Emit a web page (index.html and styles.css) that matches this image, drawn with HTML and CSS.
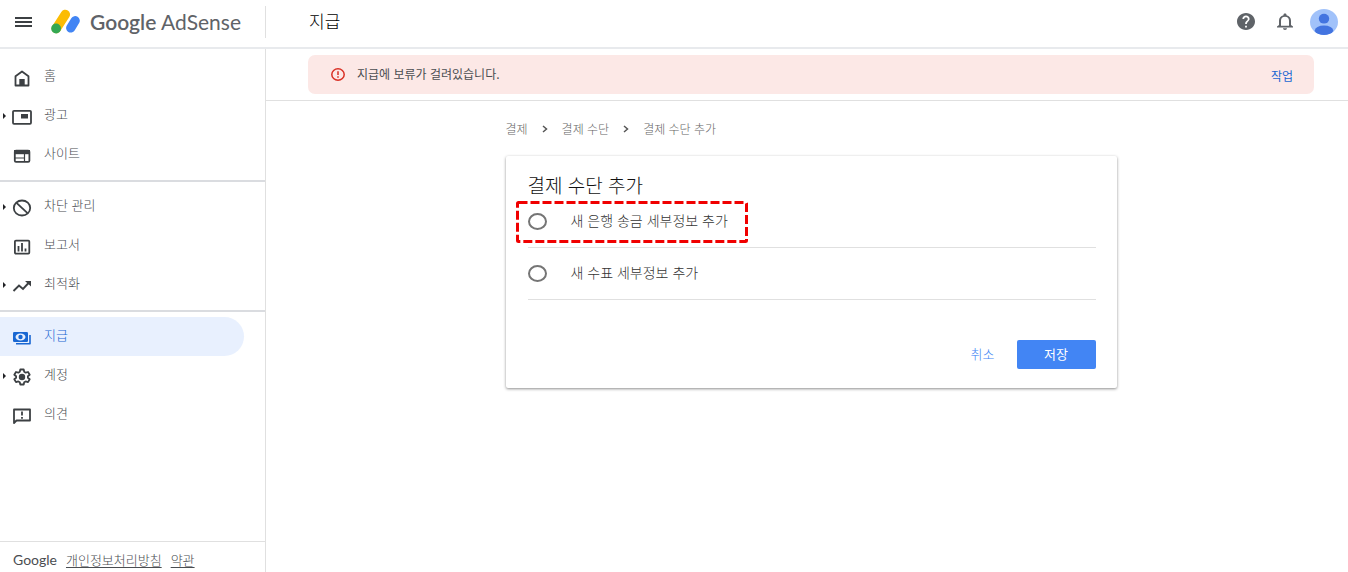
FILE: index.html
```html
<!DOCTYPE html>
<html lang="ko">
<head>
<meta charset="utf-8">
<meta name="viewport" content="width=device-width, initial-scale=1">
<title>Google AdSense</title>
<link rel="stylesheet" href="styles.css">
</head>
<body>
<header class="topbar">
  <div class="brand">
    <button class="icon-button menu-button" type="button" aria-label="메뉴">
      <svg width="18" height="12" viewBox="0 0 18 12"><path d="M1 2h17M1 6h17M1 10h17" stroke="#3c4043" stroke-width="2"/></svg>
    </button>
    <a class="logo" href="#">
      <svg class="logo-mark" width="30" height="26" viewBox="0 0 30 26" aria-hidden="true">
        <path d="M14.300 5.500L5.300 19.500" stroke="#fbbc04" stroke-width="9.500" stroke-linecap="round"/>
        <path d="M24.200 11.700L19.700 19" stroke="#4285f4" stroke-width="9.200" stroke-linecap="round"/>
        <circle cx="5.100" cy="19.500" r="4.900" fill="#34a853"/>
      </svg>
      <span class="logo-text"><span class="logo-google">Google</span> AdSense</span>
    </a>
  </div>
  <h1 class="page-title">지급</h1>
  <div class="top-actions">
    <button class="icon-button" type="button" aria-label="도움말">
      <svg width="18" height="17" viewBox="2 2 20 20" preserveAspectRatio="none"><path fill="#5f6368" d="M12 2C6.480 2 2 6.480 2 12s4.480 10 10 10 10-4.480 10-10S17.520 2 12 2zm1 17h-2v-2h2v2zm2.070-7.750l-.9.920C13.450 12.900 13 13.500 13 15h-2v-.5c0-1.100.45-2.100 1.170-2.830l1.240-1.260c.37-.36.590-.86.590-1.410 0-1.100-.9-2-2-2s-2 .9-2 2H8c0-2.210 1.790-4 4-4s4 1.790 4 4c0 .88-.36 1.680-.93 2.250z"/></svg>
    </button>
    <button class="icon-button" type="button" aria-label="알림">
      <svg width="16" height="17" viewBox="4 2 16 20" preserveAspectRatio="none"><path fill="#5f6368" d="M12 22c1.100 0 2-.9 2-2h-4c0 1.100.9 2 2 2zm6-6v-5c0-3.070-1.630-5.640-4.500-6.320V4c0-.83-.67-1.500-1.500-1.500s-1.500.67-1.500 1.500v.68C7.640 5.360 6 7.920 6 11v5l-2 2v1h16v-1l-2-2zm-2 1H8v-6c0-2.480 1.510-4.500 4-4.500s4 2.020 4 4.500v6z"/></svg>
    </button>
    <button class="icon-button" type="button" aria-label="계정 프로필">
      <svg width="28" height="26" viewBox="0 0 28 26"><defs><clipPath id="avatar"><ellipse cx="14" cy="13" rx="14" ry="13"/></clipPath></defs><g clip-path="url(#avatar)"><path fill="#a1c2fa" d="M0 0h28v26H0z"/><ellipse cx="14" cy="9.700" rx="5.200" ry="4.900" fill="#4374e0"/><ellipse cx="14" cy="21.500" rx="9.200" ry="4.900" fill="#4374e0"/></g></svg>
    </button>
  </div>
</header>

<div class="layout">
  <aside class="sidebar">
    <nav aria-label="주 메뉴">
      <ul class="nav-group">
        <li><a class="nav-item" href="#">
          <svg class="nav-icon" viewBox="0 0 20 20"><path d="M3.500 17.500V8.200L10 3.500l6.500 4.700v9.300z" fill="none" stroke="#3c4043" stroke-width="1.800" stroke-linejoin="round"/><path d="M7.300 11h5.400v7H7.300z" fill="#3c4043"/></svg>
          <span>홈</span></a></li>
        <li><a class="nav-item expandable" href="#">
          <svg class="nav-icon" viewBox="0 0 20 20"><rect x="1" y="3.800" width="18" height="13" rx="1" fill="none" stroke="#3c4043" stroke-width="1.800"/><path d="M9 7h7v4.500H9z" fill="#3c4043"/></svg>
          <span>광고</span></a></li>
        <li><a class="nav-item" href="#">
          <svg class="nav-icon" viewBox="0 0 20 20"><rect x="2.800" y="4.600" width="14.600" height="11.300" rx="1.200" fill="none" stroke="#3c4043" stroke-width="1.800"/><path d="M2 4h16v4.200H2z" fill="#3c4043"/><path d="M3 12h9M12.500 8v8" stroke="#3c4043" stroke-width="1.200"/></svg>
          <span>사이트</span></a></li>
      </ul>
      <ul class="nav-group">
        <li><a class="nav-item expandable" href="#">
          <svg class="nav-icon" viewBox="0 0 20 20"><ellipse cx="10" cy="10" rx="8.200" ry="7.500" fill="none" stroke="#3c4043" stroke-width="1.800"/><path d="M4.500 4.800l11 10.400" stroke="#3c4043" stroke-width="1.800"/></svg>
          <span>차단 관리</span></a></li>
        <li><a class="nav-item" href="#">
          <svg class="nav-icon" viewBox="0 0 20 20"><rect x="2.900" y="3.600" width="14.400" height="13" rx="1" fill="none" stroke="#3c4043" stroke-width="1.800"/><path d="M6.500 9v5.500M10 6v8.500M13.500 11.500v3" stroke="#3c4043" stroke-width="1.800"/></svg>
          <span>보고서</span></a></li>
        <li><a class="nav-item expandable" href="#">
          <svg class="nav-icon" viewBox="0 0 20 20"><path d="M1.500 15l5.500-5.500 4 3.500 6-6.500" fill="none" stroke="#3c4043" stroke-width="1.900"/><path d="M13 5h6v5.500z" fill="#3c4043"/></svg>
          <span>최적화</span></a></li>
      </ul>
      <ul class="nav-group">
        <li><a class="nav-item active" href="#" aria-current="page">
          <svg class="nav-icon" viewBox="0 0 20 20"><rect x="1" y="4" width="15" height="10" rx="1.300" fill="#1967d2"/><ellipse cx="8.500" cy="9" rx="5" ry="3.500" fill="#e8f0fe"/><circle cx="8.500" cy="9" r="2.200" fill="#1967d2"/><path d="M4 15.700h14V7" fill="none" stroke="#1967d2" stroke-width="1.600" stroke-linejoin="round"/></svg>
          <span>지급</span></a></li>
        <li><a class="nav-item expandable" href="#">
          <svg class="nav-icon" viewBox="0 0 20 20"><path d="M8.300 2.500h3.400l.5 2.300 1.500.9 2.300-.7 1.700 2.800-1.800 1.500v1.500l1.800 1.500-1.700 2.800-2.300-.7-1.500.9-.5 2.200H8.300l-.5-2.200-1.500-.9-2.300.7-1.700-2.800 1.800-1.500V9.300L2.300 7.800 4 5l2.300.7 1.500-.9z" fill="none" stroke="#3c4043" stroke-width="1.800" stroke-linejoin="round"/><circle cx="10" cy="10" r="3.200" fill="#3c4043"/></svg>
          <span>계정</span></a></li>
        <li><a class="nav-item" href="#">
          <svg class="nav-icon" viewBox="0 0 20 20"><path d="M2 17V3.500h16v11H4.500z" fill="none" stroke="#3c4043" stroke-width="1.800" stroke-linejoin="round"/><path d="M10 5.500v4M10 11v1.800" stroke="#3c4043" stroke-width="1.800"/></svg>
          <span>의견</span></a></li>
      </ul>
    </nav>
    <footer class="side-footer">
      <span class="footer-google">Google</span>
      <a href="#">개인정보처리방침</a>
      <a href="#">약관</a>
    </footer>
  </aside>

  <main class="main">
    <div class="banner">
      <div class="alert" role="alert">
        <svg width="14" height="13" viewBox="0 0 14 13" aria-hidden="true"><ellipse cx="7" cy="6.500" rx="6.200" ry="5.700" fill="none" stroke="#d93025" stroke-width="1.500"/><path d="M7 3.300v3.800M7 8.200v1.600" stroke="#d93025" stroke-width="1.500"/></svg>
        <span class="alert-text">지급에 보류가 걸려있습니다.</span>
        <a class="alert-action" href="#">작업</a>
      </div>
    </div>
    <div class="content">
      <nav class="crumbs" aria-label="탐색 경로">
        <a href="#">결제</a>
        <svg width="6" height="8" viewBox="0 0 6 8"><path d="M1 1l3.500 3L1 7" fill="none" stroke="#555" stroke-width="1.500"/></svg>
        <a href="#">결제 수단</a>
        <svg width="6" height="8" viewBox="0 0 6 8"><path d="M1 1l3.500 3L1 7" fill="none" stroke="#555" stroke-width="1.500"/></svg>
        <span>결제 수단 추가</span>
      </nav>
      <form class="card">
        <h2 class="card-title">결제 수단 추가</h2>
        <div class="option">
          <input type="radio" name="method" id="bank">
          <label for="bank">새 은행 송금 세부정보 추가</label>
          <svg class="highlight" width="232" height="42" viewBox="0 0 232 42" aria-hidden="true"><rect x="1.500" y="1.500" width="229" height="39" rx="1" fill="none" stroke="#f00000" stroke-width="3" stroke-dasharray="9 3"/></svg>
        </div>
        <div class="option">
          <input type="radio" name="method" id="check">
          <label for="check">새 수표 세부정보 추가</label>
        </div>
        <div class="actions">
          <button class="btn btn-text" type="button">취소</button>
          <button class="btn btn-primary" type="button">저장</button>
        </div>
      </form>
    </div>
  </main>
</div>
</body>
</html>
```

FILE: styles.css
```css
* {
  box-sizing: border-box;
}

body {
  margin: 0;
  min-height: 100vh;
  display: flex;
  flex-direction: column;
  background: #fff;
  color: #4a4d51;
  font: 300 14px/20px "Noto Sans CJK KR", sans-serif;
}

a {
  color: inherit;
  text-decoration: none;
}

button {
  font: inherit;
  border: 0;
  background: none;
  padding: 0;
  cursor: pointer;
}

svg {
  display: block;
  flex: none;
}

.topbar {
  display: flex;
  align-items: center;
  height: 49px;
  padding: 0 10px 4px 0;
  border-bottom: 2px solid #e8eaed;
}

.brand {
  display: flex;
  align-items: center;
  gap: 19px;
  width: 266px;
  height: 32px;
  padding-left: 14px;
  border-right: 1px solid #e0e0e0;
}

.logo {
  display: flex;
  align-items: center;
  gap: 9px;
}

.logo-text {
  font: 400 21px/26px Lato, sans-serif;
  color: #5f6368;
}

.logo-google {
  font-weight: 600;
}

.page-title {
  flex: 1;
  margin: 0;
  padding: 0 0 2px 43px;
  font-size: 17px;
  line-height: 24px;
  font-weight: 300;
  color: #000;
}

.top-actions {
  display: flex;
  align-items: center;
  gap: 11px;
}

.top-actions .icon-button {
  min-width: 28px;
  display: flex;
  justify-content: center;
}

.layout {
  flex: 1;
  display: flex;
}

.sidebar {
  flex: none;
  display: flex;
  flex-direction: column;
  justify-content: space-between;
  width: 266px;
  padding-top: 8px;
  border-right: 1px solid #e0e0e0;
}

.nav-group {
  margin: 0;
  padding: 0;
  list-style: none;
  font-size: 13px;
}

.nav-group + .nav-group {
  margin-top: 6px;
  padding-top: 5px;
  border-top: 2px solid #dadce0;
}

.nav-item {
  position: relative;
  display: flex;
  align-items: center;
  gap: 12px;
  height: 39px;
  margin-right: 21px;
  padding-left: 12px;
  border-radius: 0 20px 20px 0;
}

.nav-item span {
  padding-bottom: 4px;
}

.nav-icon {
  width: 20px;
  height: 20px;
  margin-top: 2px;
}

.nav-item.expandable::before {
  content: "";
  position: absolute;
  left: 3px;
  top: 17px;
  border: 3px solid transparent;
  border-left-color: #202124;
  border-right-width: 0;
}

.nav-item.active {
  background: #e8f0fe;
  color: #1967d2;
}

.side-footer {
  display: flex;
  align-items: center;
  gap: 9px;
  padding: 8px 13px 2px;
  border-top: 1px solid #e0e0e0;
  font-size: 13px;
}

.side-footer a {
  text-decoration: underline;
  text-underline-offset: 2px;
}

.footer-google {
  font: 400 14px/20px Lato, sans-serif;
}

.main {
  flex: 1;
  min-width: 0;
}

.banner {
  padding: 6px 34px 6px 42px;
  border-bottom: 1px solid #e0e0e0;
}

.alert {
  display: flex;
  align-items: center;
  gap: 12px;
  min-height: 39px;
  padding: 0 21px 0 23px;
  border-radius: 7px;
  background: #fce8e6;
  font-size: 12px;
  font-weight: 400;
}

.alert-text {
  flex: 1;
  padding-bottom: 2px;
}

.alert-action {
  padding-top: 3px;
  color: #1967d2;
}

.content {
  padding: 18px 34px 24px 42px;
}

.crumbs,
.card {
  max-width: 611px;
  margin: 0 auto;
}

.crumbs {
  display: flex;
  align-items: center;
  gap: 14px;
  font-size: 12px;
  color: #666;
}

.card {
  margin-top: 17px;
  padding: 18px 21px 19px 22px;
  border-radius: 2px;
  background: #fff;
  box-shadow: 0 1px 3px rgba(0, 0, 0, 0.45);
}

.card-title {
  margin: 0;
  font-size: 19px;
  line-height: 22px;
  font-weight: 300;
  color: #111;
}

.option {
  position: relative;
  display: flex;
  align-items: center;
  gap: 24px;
  height: 52px;
  border-bottom: 1px solid #e0e0e0;
  color: #333;
}

.option label {
  padding-bottom: 3px;
}

.option input {
  appearance: none;
  flex: none;
  width: 19px;
  height: 17px;
  margin: 0;
  border: 2px solid #757575;
  border-radius: 50%;
}

.option input:checked {
  border-width: 6px;
  border-color: #4285f4;
}

.highlight {
  position: absolute;
  left: -12px;
  top: 5px;
  pointer-events: none;
}

.actions {
  display: flex;
  justify-content: flex-end;
  gap: 22px;
  padding-top: 40px;
}

.btn {
  height: 29px;
  padding-bottom: 2px;
  font-size: 13px;
  border-radius: 2px;
}

.btn-text {
  color: #4285f4;
}

.btn-primary {
  min-width: 79px;
  background: #4285f4;
  color: #fff;
  font-weight: 400;
}
```
